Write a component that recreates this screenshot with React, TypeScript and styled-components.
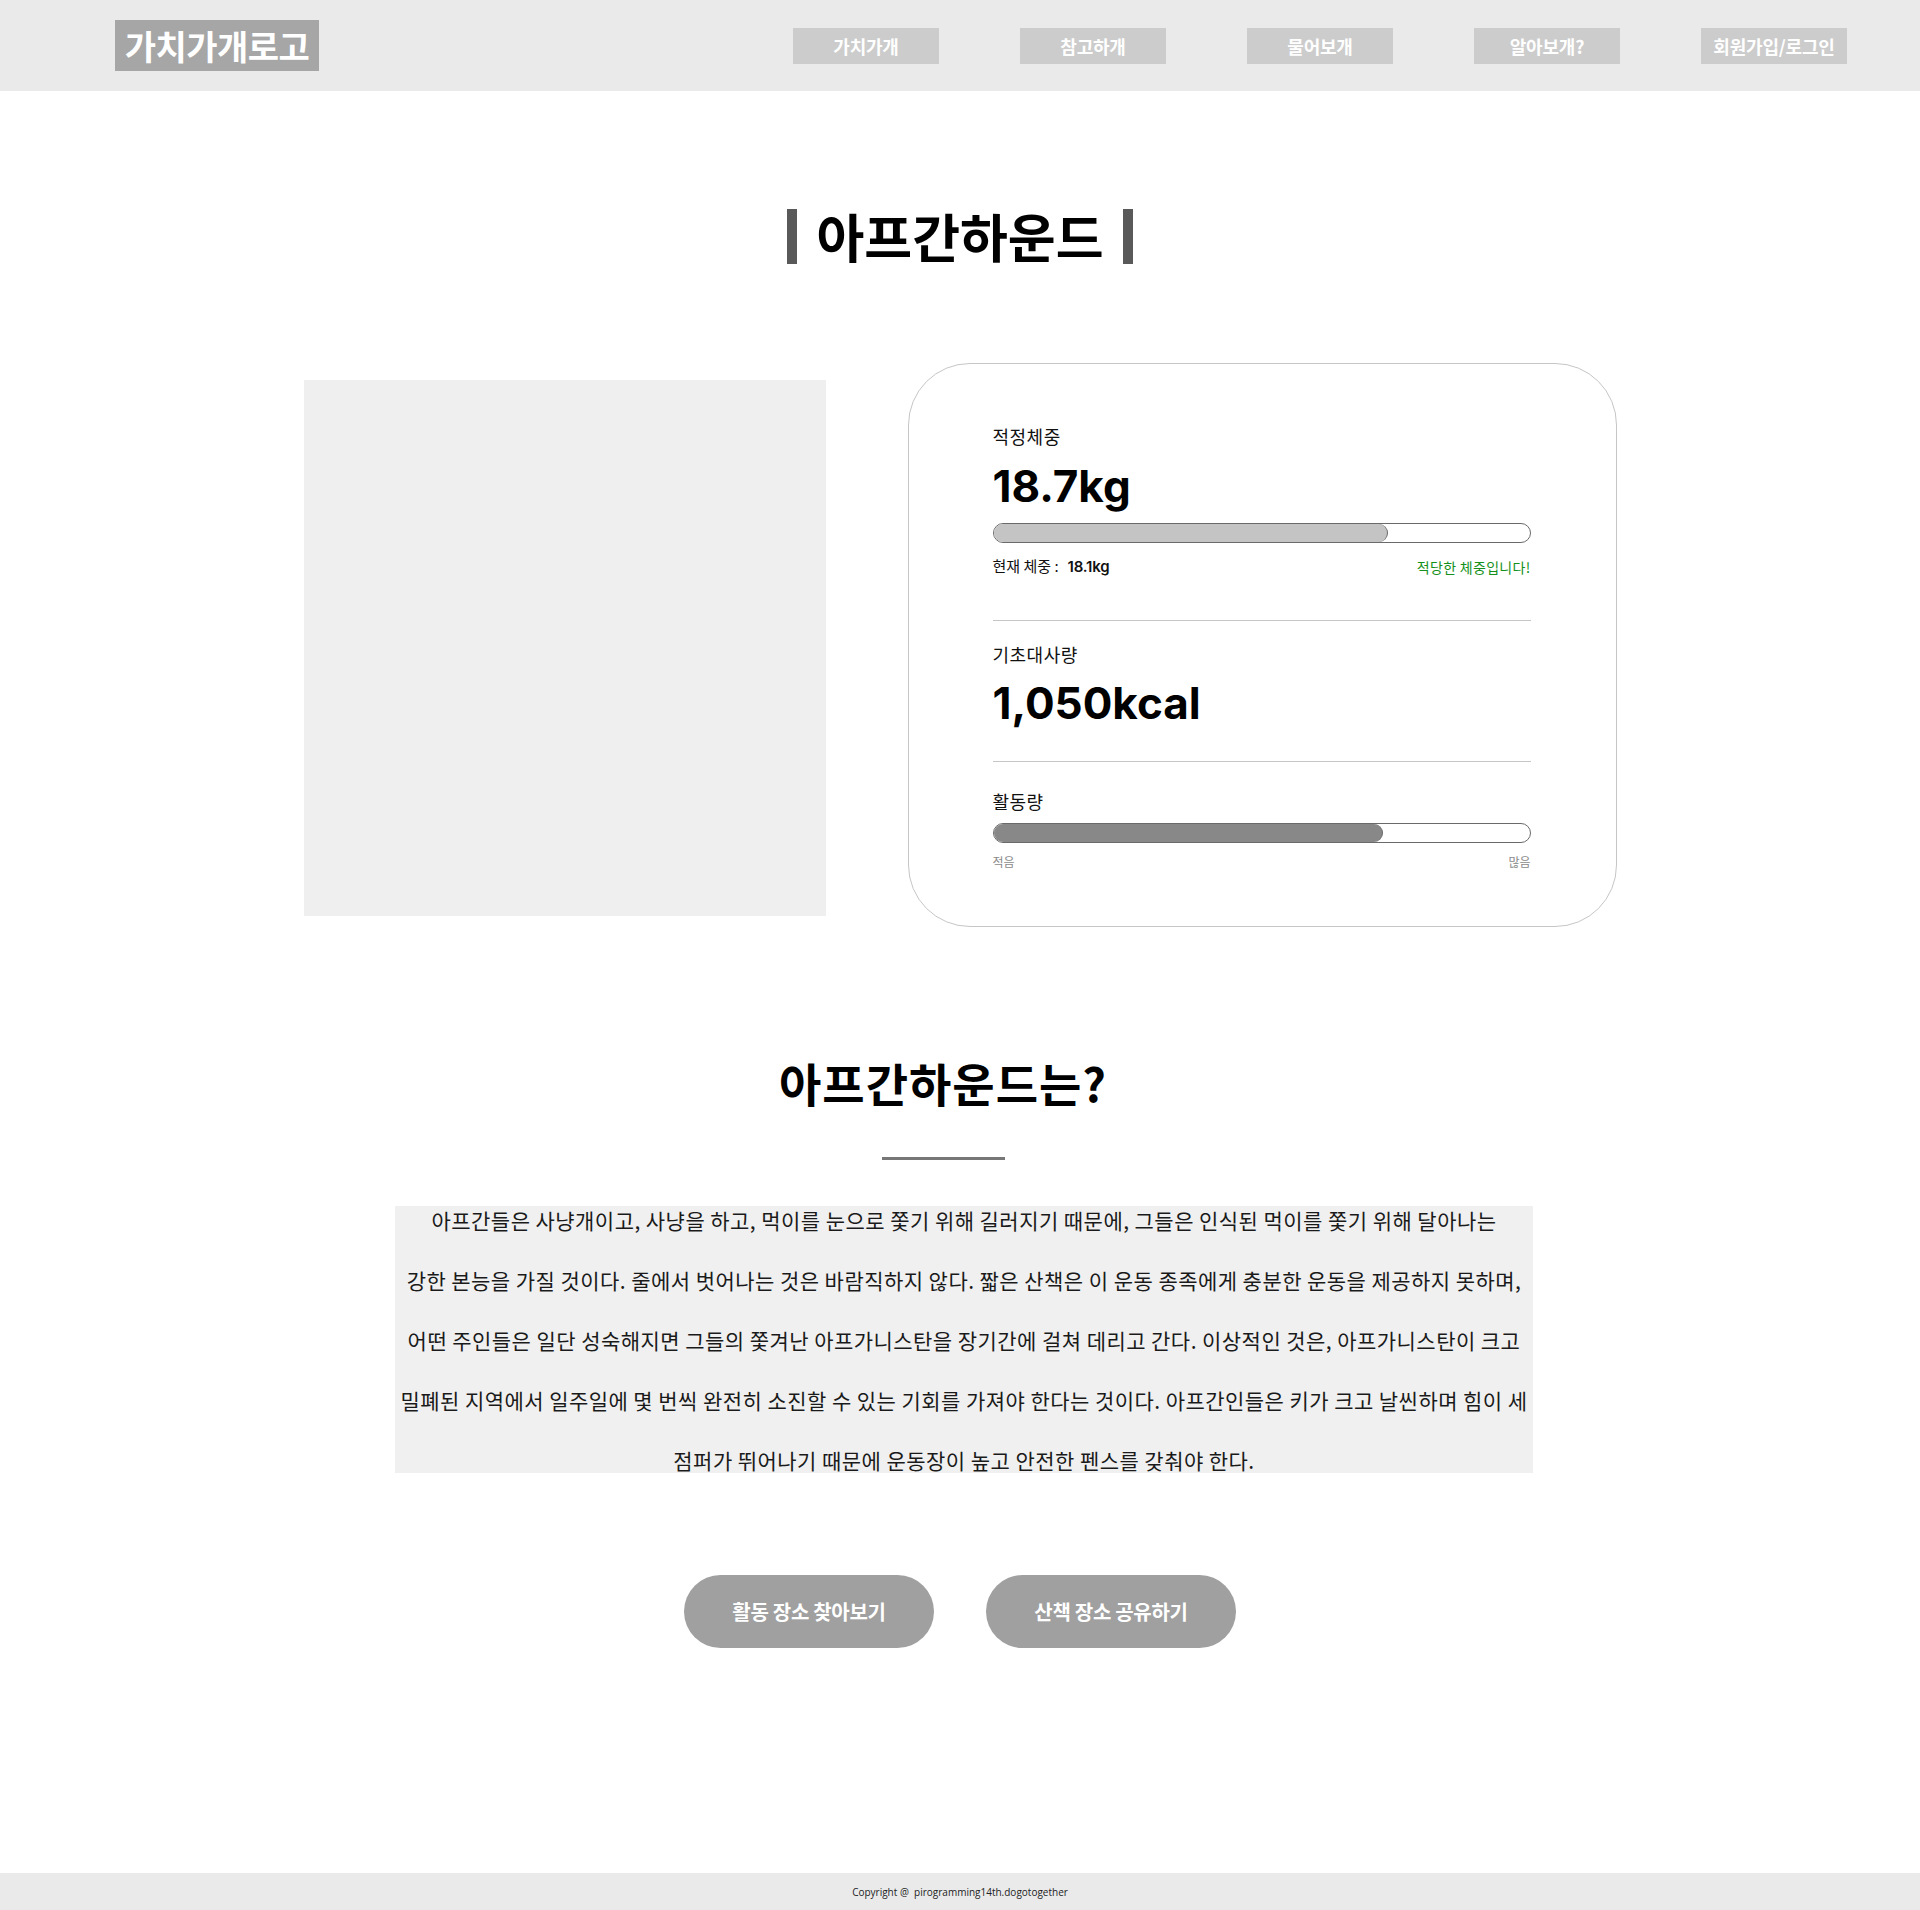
import React from "react";
import styled, { createGlobalStyle } from "styled-components";

const GlobalStyle = createGlobalStyle`
  html, body {
    margin: 0;
    padding: 0;
    background: #ffffff;
    font-family: "Noto Sans CJK KR", "Noto Sans", sans-serif;
    color: #000;
  }
  #root {
    min-height: 100vh;
    display: flex;
    flex-direction: column;
  }
  * { box-sizing: border-box; }
`;

const Header = styled.header`
  height: 91px;
  background: #eaeaea;
  display: flex;
  align-items: center;
  justify-content: space-between;
  padding: 0 73px 0 115px;
`;

const Logo = styled.div`
  width: 204px;
  height: 51px;
  background: #a6a6a6;
  color: #ffffff;
  font-family: "Noto Sans CJK KR", sans-serif;
  font-weight: 700;
  font-size: 34px;
  letter-spacing: -0.5px;
  display: flex;
  align-items: center;
  justify-content: center;
  margin-top: -1px;
`;

const Nav = styled.nav`
  display: flex;
  gap: 81px;
`;

const NavButton = styled.div`
  width: 146px;
  height: 36px;
  background: #cccccc;
  color: #ffffff;
  font-family: "Noto Sans CJK KR", sans-serif;
  font-size: 18px;
  font-weight: 700;
  display: flex;
  align-items: center;
  justify-content: center;
  letter-spacing: -0.2px;
`;

const Main = styled.main`
  flex: 1;
  display: flex;
  flex-direction: column;
  align-items: center;
`;

const TitleRow = styled.div`
  margin-top: 115px;
  height: 60px;
  display: flex;
  align-items: center;
  gap: 19px;
`;

const TitleBar = styled.span`
  width: 10px;
  height: 55px;
  background: #595959;
`;

const Title = styled.h1`
  margin: 0;
  font-family: "Noto Sans CJK KR", sans-serif;
  font-weight: 700;
  font-size: 52px;
  line-height: 60px;
  letter-spacing: 0px;
  color: #000;
`;

const InfoRow = styled.section`
  margin-top: 97px;
  display: flex;
  align-items: center;
  gap: 82px;
`;

const PhotoBox = styled.div`
  width: 522px;
  height: 536px;
  margin-top: 6px;
  background: #efefef;
`;

const Card = styled.div`
  width: 709px;
  height: 564px;
  border: 1px solid #c6c6c6;
  border-radius: 62px;
  padding: 60px 85px 0 84px;
  display: flex;
  flex-direction: column;
  font-family: "Inter", "Noto Sans CJK KR", sans-serif;
`;

const Label = styled.div<{ $mt?: number }>`
  font-family: "Noto Sans CJK KR", sans-serif;
  font-size: 18px;
  line-height: 24px;
  letter-spacing: 0.5px;
  color: #111;
  margin-top: ${(p) => p.$mt ?? 0}px;
`;

const BigValue = styled.div<{ $mt?: number }>`
  font-family: "Inter", sans-serif;
  font-weight: 700;
  font-size: 44px;
  line-height: 52px;
  letter-spacing: 0px;
  color: #000;
  margin-top: ${(p) => p.$mt ?? 0}px;
`;

const Track = styled.div<{ $mt?: number }>`
  margin-top: ${(p) => p.$mt ?? 0}px;
  height: 20px;
  border: 1px solid #6a6a6a;
  border-radius: 10px;
  background: #ffffff;
  overflow: hidden;
  display: flex;
`;

const Fill = styled.div<{ $color: string }>`
  height: 100%;
  background: ${(p) => p.$color};
  border-right: 1px solid #6a6a6a;
  border-radius: 0 10px 10px 0;
`;

const SubRow = styled.div<{ $mt?: number }>`
  margin-top: ${(p) => p.$mt ?? 0}px;
  display: flex;
  justify-content: space-between;
  align-items: center;
`;

const SubText = styled.span`
  font-family: "Noto Sans CJK KR", sans-serif;
  font-size: 15px;
  line-height: 20px;
  color: #111;
`;

const SubValue = styled.span`
  font-family: "Inter", sans-serif;
  font-weight: 600;
  font-size: 15px;
  margin-left: 9px;
  letter-spacing: -0.2px;
`;

const GoodText = styled.span`
  font-family: "Noto Sans CJK KR", sans-serif;
  font-size: 14px;
  line-height: 20px;
  letter-spacing: 0.3px;
  color: #15901a;
`;

const ScaleText = styled.span`
  font-family: "Noto Sans CJK KR", sans-serif;
  font-size: 12px;
  line-height: 16px;
  color: #8a8a8a;
`;

const Divider = styled.hr<{ $mt?: number }>`
  margin: ${(p) => p.$mt ?? 0}px 0 0 0;
  border: none;
  height: 1px;
  background: #c6c6c6;
`;

const AboutTitle = styled.h2`
  margin: 128px 34px 0 0;
  font-family: "Noto Sans CJK KR", sans-serif;
  font-weight: 700;
  font-size: 46px;
  line-height: 54px;
  letter-spacing: 1px;
  color: #000;
`;

const Underline = styled.div`
  margin: 48px 34px 0 0;
  width: 123px;
  height: 3px;
  background: #777777;
`;

const TextBox = styled.div`
  margin: 46px 0 0 8px;
  width: 1138px;
  height: 267px;
  background: #f0f0f0;
  display: flex;
  flex-direction: column;
  justify-content: center;
`;

const Paragraph = styled.p`
  margin: 0;
  flex-shrink: 0;
  font-family: "Noto Sans CJK KR", sans-serif;
  font-size: 21px;
  line-height: 60px;
  text-align: center;
  color: #1a1a1a;
  letter-spacing: 0.45px;
  white-space: nowrap;
`;

const ButtonRow = styled.div`
  margin-top: 102px;
  display: flex;
  gap: 52px;
`;

const PillButton = styled.button`
  width: 250px;
  height: 73px;
  border: none;
  border-radius: 37px;
  background: #a0a0a0;
  color: #ffffff;
  font-family: "Noto Sans CJK KR", sans-serif;
  font-weight: 700;
  font-size: 20px;
  letter-spacing: -0.3px;
  cursor: pointer;
`;

const Footer = styled.footer`
  height: 37px;
  background: #eaeaea;
  display: flex;
  align-items: center;
  justify-content: center;
  font-family: "Open Sans", "Noto Sans", sans-serif;
  font-size: 10px;
  color: #222;
`;

const navItems = ["가치가개", "참고하개", "물어보개", "알아보개?", "회원가입/로그인"];

const lines = [
  "아프간들은 사냥개이고, 사냥을 하고, 먹이를 눈으로 쫓기 위해 길러지기 때문에, 그들은 인식된 먹이를 쫓기 위해 달아나는",
  "강한 본능을 가질 것이다. 줄에서 벗어나는 것은 바람직하지 않다. 짧은 산책은 이 운동 종족에게 충분한 운동을 제공하지 못하며,",
  "어떤 주인들은 일단 성숙해지면 그들의 쫓겨난 아프가니스탄을 장기간에 걸쳐 데리고 간다. 이상적인 것은, 아프가니스탄이 크고",
  "밀폐된 지역에서 일주일에 몇 번씩 완전히 소진할 수 있는 기회를 가져야 한다는 것이다. 아프간인들은 키가 크고 날씬하며 힘이 세",
  "점퍼가 뛰어나기 때문에 운동장이 높고 안전한 펜스를 갖춰야 한다.",
];

export default function App() {
  const weightPct = 73.6;
  const activityPct = 72.6;
  return (
    <>
      <GlobalStyle />
      <Header>
        <Logo>가치가개로고</Logo>
        <Nav>
          {navItems.map((n) => (
            <NavButton key={n}>{n}</NavButton>
          ))}
        </Nav>
      </Header>
      <Main>
        <TitleRow>
          <TitleBar />
          <Title>아프간하운드</Title>
          <TitleBar />
        </TitleRow>

        <InfoRow>
          <PhotoBox />
          <Card>
            <Label>적정체중</Label>
            <BigValue $mt={12}>18.7kg</BigValue>
            <Track $mt={11}>
              <Fill $color="#c4c4c4" style={{ width: `${weightPct}%` }} />
            </Track>
            <SubRow $mt={13}>
              <SubText>
                현재 체중 :<SubValue>18.1kg</SubValue>
              </SubText>
              <GoodText>적당한 체중입니다!</GoodText>
            </SubRow>
            <Divider $mt={43} />
            <Label $mt={21}>기초대사량</Label>
            <BigValue $mt={11}>1,050kcal</BigValue>
            <Divider $mt={32} />
            <Label $mt={27}>활동량</Label>
            <Track $mt={10}>
              <Fill $color="#888888" style={{ width: `${activityPct}%` }} />
            </Track>
            <SubRow $mt={11}>
              <ScaleText>적음</ScaleText>
              <ScaleText>많음</ScaleText>
            </SubRow>
          </Card>
        </InfoRow>

        <AboutTitle>아프간하운드는?</AboutTitle>
        <Underline />
        <TextBox>
          <Paragraph>
            {lines.map((l, i) => (
              <React.Fragment key={i}>
                {l}
                {i < lines.length - 1 && <br />}
              </React.Fragment>
            ))}
          </Paragraph>
        </TextBox>

        <ButtonRow>
          <PillButton>활동 장소 찾아보기</PillButton>
          <PillButton>산책 장소 공유하기</PillButton>
        </ButtonRow>
      </Main>
      <Footer>Copyright @&nbsp; pirogramming14th.dogotogether</Footer>
    </>
  );
}
